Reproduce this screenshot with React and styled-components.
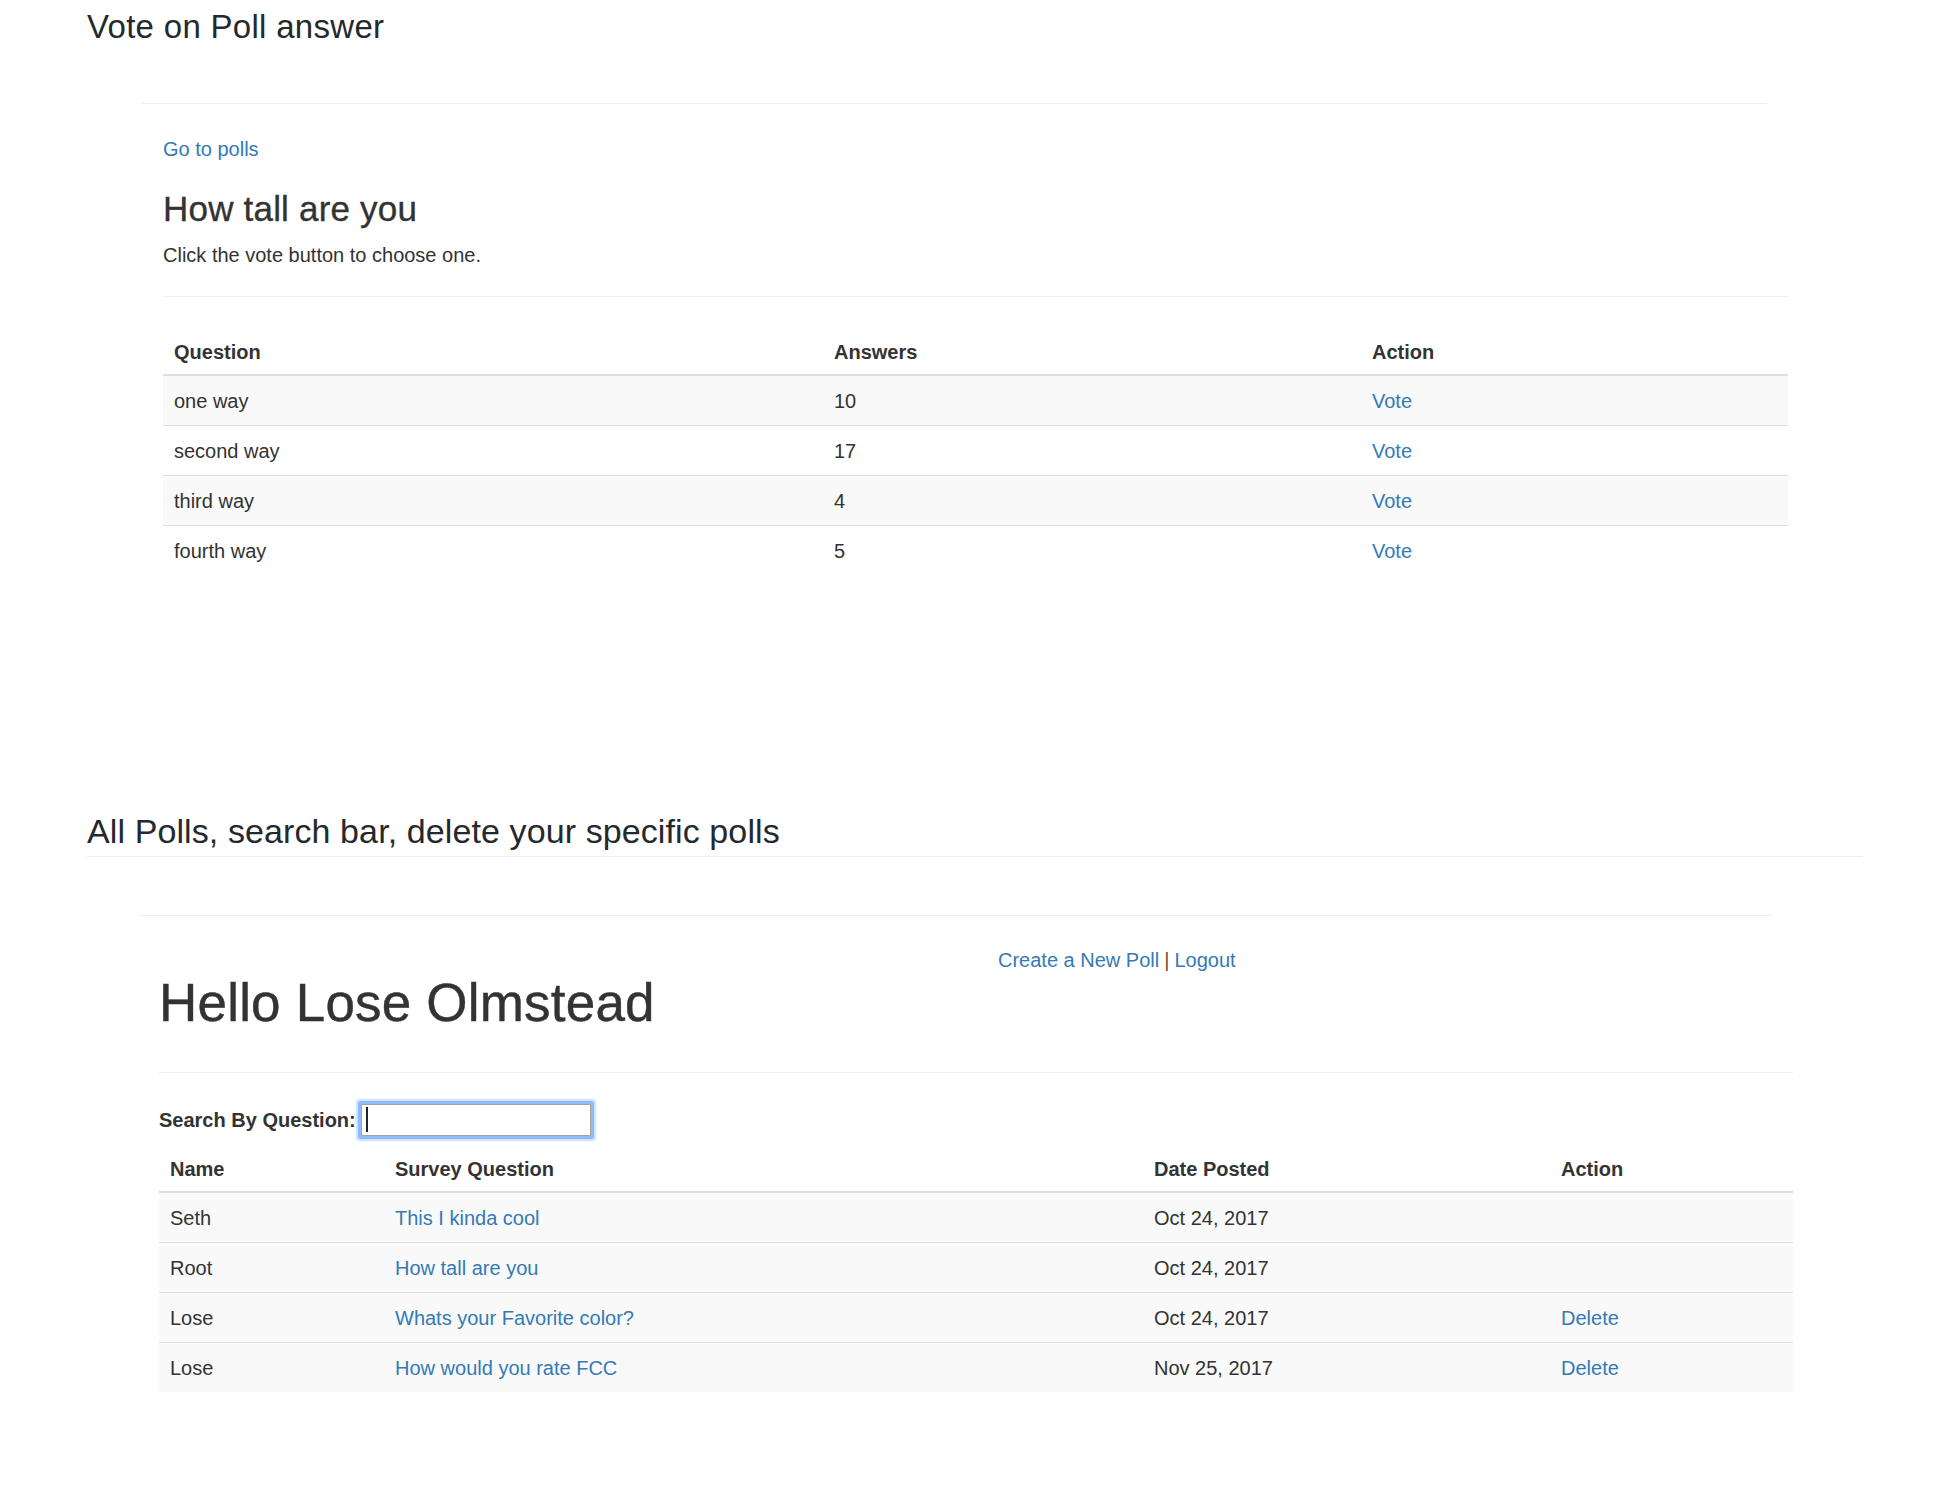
import React from "react";
import styled, { createGlobalStyle, css } from "styled-components";

const GlobalStyle = createGlobalStyle`
  html, body { margin: 0; padding: 0; background: #fff; }
  body {
    font-family: "Liberation Sans", Arial, Helvetica, sans-serif;
    color: #333;
    font-size: 20px;
    line-height: 27px;
  }
  * { box-sizing: border-box; }
`;

const Page = styled.main`
  padding: 7px 0 80px 87px;
  width: 1950px;
`;

const DocHeading = styled.h2`
  margin: ${(p) => p.$top || 0}px 0 0;
  font-size: ${(p) => p.$size}px;
  line-height: 40px;
  font-weight: 400;
  letter-spacing: ${(p) => p.$spacing || 0}px;
  color: #24292e;
  ${(p) =>
    p.$ruled &&
    css`
      width: 1776px;
      padding-bottom: 5px;
      border-bottom: 1px solid #eaecef;
    `}
`;

const Shot = styled.section`
  margin: ${(p) => p.$top}px 0 0 ${(p) => p.$left}px;
  width: ${(p) => p.$width}px;
  border-top: 1px solid #eee;
`;

const ShotBody = styled.div`
  margin-left: 21px;
  width: ${(p) => p.$width}px;
`;

const Link = styled.a`
  color: #337ab7;
  text-decoration: none;
  cursor: pointer;
`;

const BackLink = styled(Link)`
  display: block;
  margin-top: 32px;
  width: max-content;
`;

const PollTitle = styled.h3`
  margin: 27px 0 0;
  font-size: 35px;
  line-height: 38px;
  font-weight: 500;
  letter-spacing: 0.2px;
  -webkit-text-stroke: 0.35px #333;
  color: #333;
`;

const Hint = styled.p`
  margin: 14px 0 0;
`;

const Divider = styled.hr`
  margin: ${(p) => p.$top}px 0 0;
  border: 0;
  border-top: 1px solid #eee;
  height: 0;
`;

const Table = styled.table`
  margin-top: ${(p) => p.$top}px;
  width: 100%;
  border-collapse: collapse;
  border-spacing: 0;
  table-layout: fixed;
`;

const Col = styled.col`
  width: ${(p) => p.$w}px;
`;

const Th = styled.th`
  text-align: left;
  font-weight: 700;
  padding: 11px 11px 8px;
  line-height: 27px;
  vertical-align: bottom;
  border-bottom: 2px solid #ddd;
  color: #333;
`;

const Row = styled.tr`
  background: ${(p) => (p.$shaded ? "#f9f9f9" : "transparent")};
`;

const Td = styled.td`
  padding: 12px 11px 10px;
  line-height: 27px;
  border-top: 1px solid #ddd;
  vertical-align: top;
`;

const TopRow = styled.div`
  margin-top: 31px;
  display: grid;
  grid-template-columns: 839px 1fr;
  align-items: start;
`;

const Greeting = styled.h1`
  margin: 27px 0 0;
  font-size: 53px;
  line-height: 57px;
  font-weight: 500;
  letter-spacing: 0.2px;
  -webkit-text-stroke: 0.45px #333;
  color: #333;
`;

const NavLinks = styled.div`
  display: flex;
  align-items: baseline;
  gap: 5px;
`;

const Pipe = styled.span`
  color: #74502f;
`;

const SearchRow = styled.div`
  margin-top: 31px;
  height: 32px;
  display: flex;
  align-items: center;
  gap: 5px;
`;

const SearchLabel = styled.label`
  font-weight: 700;
  color: #333;
`;

const FieldWrap = styled.span`
  position: relative;
  display: inline-block;
  width: 230px;
  height: 32px;
`;

const SearchInput = styled.input`
  width: 100%;
  height: 100%;
  border: 1px solid #a3a3a3;
  border-radius: 1px;
  padding: 0 6px;
  font: inherit;
  outline: none;
  background: #fff;
  box-shadow: 0 0 0 3px #8fbcf7, 0 0 2px 5px rgba(140, 185, 245, 0.45);
`;

const Caret = styled.span`
  position: absolute;
  left: 5px;
  top: 3px;
  bottom: 4px;
  width: 2px;
  background: #222;
`;

const voteRows = [
  ["one way", "10"],
  ["second way", "17"],
  ["third way", "4"],
  ["fourth way", "5"],
];

const polls = [
  ["Seth", "This I kinda cool", "Oct 24, 2017", false],
  ["Root", "How tall are you", "Oct 24, 2017", false],
  ["Lose", "Whats your Favorite color?", "Oct 24, 2017", true],
  ["Lose", "How would you rate FCC", "Nov 25, 2017", true],
];

export default function App() {
  return (
    <>
      <GlobalStyle />
      <Page>
        <DocHeading $size={33} $spacing={0.3}>
          Vote on Poll answer
        </DocHeading>

        <Shot $top={56} $left={55} $width={1625}>
          <ShotBody $width={1625}>
            <BackLink>Go to polls</BackLink>
            <PollTitle>How tall are you</PollTitle>
            <Hint>Click the vote button to choose one.</Hint>
            <Divider $top={27} />
            <Table $top={31}>
              <colgroup>
                <Col $w={660} />
                <Col $w={538} />
                <Col $w={427} />
              </colgroup>
              <thead>
                <tr>
                  <Th>Question</Th>
                  <Th>Answers</Th>
                  <Th>Action</Th>
                </tr>
              </thead>
              <tbody>
                {voteRows.map(([q, n], i) => (
                  <Row key={q} $shaded={i % 2 === 0}>
                    <Td>{q}</Td>
                    <Td>{n}</Td>
                    <Td>
                      <Link>Vote</Link>
                    </Td>
                  </Row>
                ))}
              </tbody>
            </Table>
          </ShotBody>
        </Shot>

        <DocHeading $size={34} $top={236} $spacing={0.1} $ruled>
          All Polls, search bar, delete your specific polls
        </DocHeading>

        <Shot $top={58} $left={51} $width={1634}>
          <ShotBody $width={1634}>
            <TopRow>
              <Greeting>Hello Lose Olmstead</Greeting>
              <NavLinks>
                <Link>Create a New Poll</Link>
                <Pipe>|</Pipe>
                <Link>Logout</Link>
              </NavLinks>
            </TopRow>
            <Divider $top={41} />
            <SearchRow>
              <SearchLabel htmlFor="search">Search By Question:</SearchLabel>
              <FieldWrap>
                <SearchInput id="search" type="text" readOnly />
                <Caret />
              </FieldWrap>
            </SearchRow>
            <Table $top={9}>
              <colgroup>
                <Col $w={225} />
                <Col $w={759} />
                <Col $w={407} />
                <Col $w={243} />
              </colgroup>
              <thead>
                <tr>
                  <Th>Name</Th>
                  <Th>Survey Question</Th>
                  <Th>Date Posted</Th>
                  <Th>Action</Th>
                </tr>
              </thead>
              <tbody>
                {polls.map(([name, q, date, mine]) => (
                  <Row key={q} $shaded>
                    <Td>{name}</Td>
                    <Td>
                      <Link>{q}</Link>
                    </Td>
                    <Td>{date}</Td>
                    <Td>{mine ? <Link>Delete</Link> : null}</Td>
                  </Row>
                ))}
              </tbody>
            </Table>
          </ShotBody>
        </Shot>
      </Page>
    </>
  );
}
